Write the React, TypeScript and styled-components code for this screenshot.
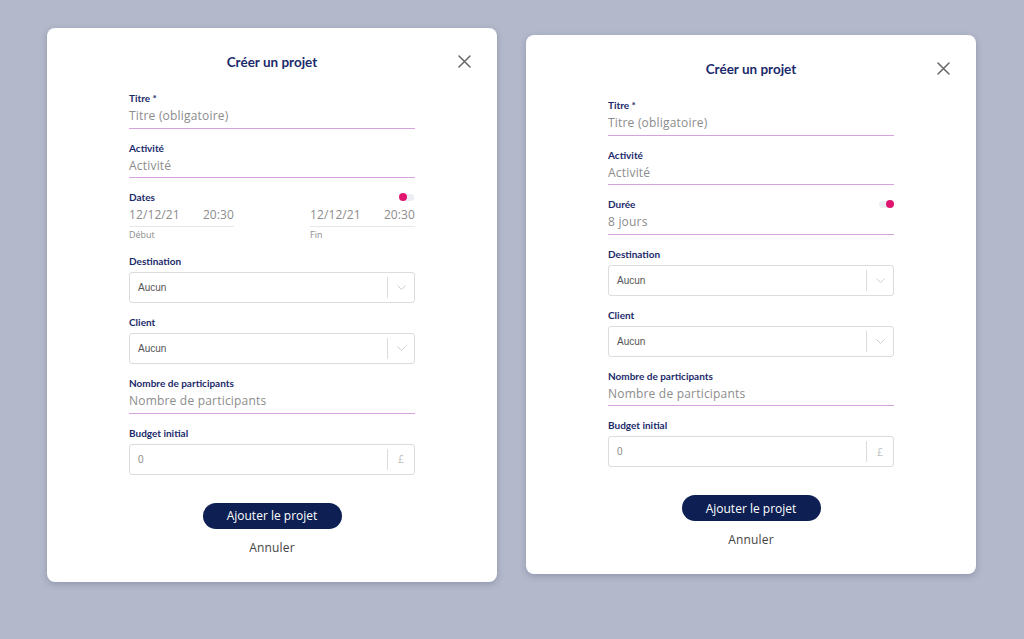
import styled, {createGlobalStyle} from 'styled-components';

const GlobalStyle = createGlobalStyle`
  html, body {
    margin: 0;
    padding: 0;
    background: #b3b9cb;
  }
  body {
    font-family: 'Lato', 'Liberation Sans', sans-serif;
  }
`;

const NAVY = '#1b2a6b';

function CloseIcon() {
  return (
    <svg width="13" height="13" viewBox="0 0 13 13">
      <path d="M1 1L12 12M12 1L1 12" stroke="#666" strokeWidth="1.5" strokeLinecap="round" />
    </svg>
  );
}

function Chevron() {
  return (
    <svg width="9" height="5" viewBox="0 0 9 5">
      <path d="M0.5 0.5L4.5 4.5L8.5 0.5" stroke="#c8c8c8" strokeWidth="0.9" fill="none" />
    </svg>
  );
}

function TextField({label, placeholder, toggle}: {label: string; placeholder: string; toggle?: 'on' | 'off'}) {
  return (
    <Field>
      <LabelRow>
        <Label>{label}</Label>
        {toggle && (
          <Toggle>
            <Knob $on={toggle === 'on'} />
          </Toggle>
        )}
      </LabelRow>
      <UnderlinedInput>{placeholder}</UnderlinedInput>
    </Field>
  );
}

function SelectField({label, value}: {label: string; value: string}) {
  return (
    <Field>
      <Label>{label}</Label>
      <Box>
        <BoxValue>{value}</BoxValue>
        <BoxAddon>
          <Chevron />
        </BoxAddon>
      </Box>
    </Field>
  );
}

function AmountField({label, value, unit}: {label: string; value: string; unit: string}) {
  return (
    <Field>
      <Label>{label}</Label>
      <Box>
        <BoxValue $light>{value}</BoxValue>
        <BoxAddon>
          <Unit>{unit}</Unit>
        </BoxAddon>
      </Box>
    </Field>
  );
}

function DatesField() {
  return (
    <Field>
      <LabelRow>
        <Label>Dates</Label>
        <Toggle>
          <Knob $on={false} />
        </Toggle>
      </LabelRow>
      <DatesRow>
        <DateGroup>
          <DateLine>
            <span>12/12/21</span>
            <span>20:30</span>
          </DateLine>
          <SubLabel>Début</SubLabel>
        </DateGroup>
        <DateGroup>
          <DateLine>
            <span>12/12/21</span>
            <span>20:30</span>
          </DateLine>
          <SubLabel>Fin</SubLabel>
        </DateGroup>
      </DatesRow>
    </Field>
  );
}

function ProjectModal({withDuration, offset}: {withDuration?: boolean; offset: number}) {
  return (
    <Card $offset={offset}>
      <Header>
        <Title>Créer un projet</Title>
        <CloseButton>
          <CloseIcon />
        </CloseButton>
      </Header>
      <Form>
        <TextField label="Titre *" placeholder="Titre (obligatoire)" />
        <TextField label="Activité" placeholder="Activité" />
        {withDuration ? <TextField label="Durée" placeholder="8 jours" toggle="on" /> : <DatesField />}
        <SelectField label="Destination" value="Aucun" />
        <SelectField label="Client" value="Aucun" />
        <TextField label="Nombre de participants" placeholder="Nombre de participants" />
        <AmountField label="Budget initial" value="0" unit="£" />
      </Form>
      <Actions>
        <PrimaryButton>Ajouter le projet</PrimaryButton>
        <CancelButton>Annuler</CancelButton>
      </Actions>
    </Card>
  );
}

export default function App() {
  return (
    <>
      <GlobalStyle />
      <Page>
        <ProjectModal offset={0} />
        <ProjectModal offset={7} withDuration />
      </Page>
    </>
  );
}

const Page = styled.div`
  display: flex;
  align-items: flex-start;
  gap: 29px;
  padding: 28px 0 0 47px;
  min-height: 639px;
  box-sizing: border-box;
`;

const Card = styled.div<{$offset: number}>`
  width: 450px;
  margin-top: ${(p) => p.$offset}px;
  background: #fff;
  border-radius: 8px;
  box-shadow: 0 2px 6px rgba(40, 45, 70, 0.25);
  padding: 24px 0 27px;
  box-sizing: border-box;
`;

const Header = styled.div`
  position: relative;
  display: flex;
  justify-content: center;
  align-items: center;
  height: 20px;
`;

const Title = styled.div`
  font-family: 'Lato', sans-serif;
  font-weight: 700;
  font-size: 13.5px;
  color: ${NAVY};
`;

const CloseButton = styled.div`
  position: absolute;
  right: 26px;
  top: 3px;
  display: flex;
`;

const Form = styled.div`
  width: 286px;
  margin: 20px auto 0;
  display: flex;
  flex-direction: column;
  gap: 13px;
`;

const Field = styled.div`
  display: flex;
  flex-direction: column;
`;

const LabelRow = styled.div`
  display: flex;
  justify-content: space-between;
  align-items: center;
`;

const Label = styled.div`
  font-family: 'Lato', sans-serif;
  font-weight: 700;
  font-size: 10px;
  line-height: 12px;
  color: ${NAVY};
`;

const Toggle = styled.div`
  width: 14px;
  height: 7px;
  border-radius: 4px;
  background: #eceef3;
  position: relative;
  margin-right: 1px;
`;

const Knob = styled.div<{$on: boolean}>`
  position: absolute;
  top: -0.5px;
  ${(p) => (p.$on ? 'right: -1px;' : 'left: -1px;')}
  width: 8px;
  height: 8px;
  border-radius: 50%;
  background: #e0156f;
`;

const UnderlinedInput = styled.div`
  height: 23.5px;
  display: flex;
  align-items: center;
  border-bottom: 1px solid #d4a3dd;
  font-family: 'Open Sans', sans-serif;
  font-size: 12px;
  letter-spacing: 0.2px;
  color: #8c8c8c;
`;

const DatesRow = styled.div`
  display: flex;
  justify-content: space-between;
`;

const DateGroup = styled.div`
  width: 105px;
  display: flex;
  flex-direction: column;
`;

const DateLine = styled.div`
  height: 23px;
  display: flex;
  justify-content: space-between;
  align-items: center;
  border-bottom: 1px solid #e8e8e8;
  font-family: 'Open Sans', sans-serif;
  font-size: 12px;
  letter-spacing: 0.1px;
  color: #8c8c8c;
`;

const SubLabel = styled.div`
  font-family: 'Open Sans', sans-serif;
  font-size: 9px;
  line-height: 14px;
  margin-top: 1px;
  color: #8c8c8c;
`;

const Box = styled.div`
  margin-top: 5px;
  height: 31px;
  box-sizing: border-box;
  border: 1px solid #dcdcdc;
  border-radius: 3px;
  display: flex;
  align-items: center;
`;

const BoxValue = styled.div<{$light?: boolean}>`
  flex: 1;
  padding-left: 8px;
  font-family: 'Liberation Sans', sans-serif;
  font-size: 10px;
  color: ${(p) => (p.$light ? '#8c8c8c' : '#555')};
`;

const BoxAddon = styled.div`
  width: 26px;
  height: 21px;
  border-left: 1px solid #dcdcdc;
  display: flex;
  align-items: center;
  justify-content: center;
`;

const Unit = styled.span`
  font-family: 'Open Sans', sans-serif;
  font-size: 10px;
  color: #bdbdbd;
`;

const Actions = styled.div`
  margin-top: 28px;
  display: flex;
  flex-direction: column;
  align-items: center;
  gap: 10px;
`;

const PrimaryButton = styled.button`
  width: 139px;
  height: 26px;
  border: 0;
  border-radius: 13px;
  background: #0d1f53;
  color: #fff;
  font-family: 'Open Sans', sans-serif;
  font-weight: 500;
  font-size: 12px;
  padding: 0;
`;

const CancelButton = styled.button`
  border: 0;
  background: none;
  padding: 0;
  height: 16px;
  font-family: 'Open Sans', sans-serif;
  font-size: 12px;
  letter-spacing: 0.2px;
  color: #444;
`;
